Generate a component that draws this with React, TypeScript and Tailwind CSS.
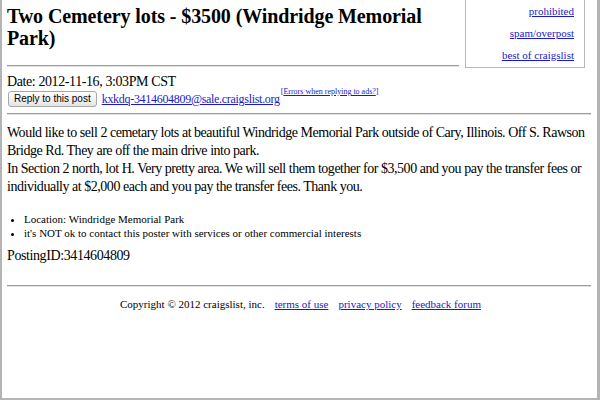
import React from "react";

const Hr = ({ className = "" }: { className?: string }) => (
  <div className={"border-t border-t-[#9c9c9c] border-b border-b-[#e2e2e2] " + className} />
);

export default function App() {
  return (
    <div
      className="w-[600px] h-[400px] bg-white border-l-2 border-r-[3px] border-b-2 border-[#b4b4b4] text-black overflow-hidden"
      style={{ fontFamily: '"Liberation Serif", "Times New Roman", serif' }}
    >
      <div className="pl-[5px] pr-[3px]">
        <div className="flex">
          <div className="flex-1 pr-[6px]">
            <h2 className="text-[20px] leading-[22px] font-bold pt-[5px] tracking-[-0.1px]">
              Two Cemetery lots - $3500 (Windridge Memorial Park)
            </h2>
            <Hr className="mt-[16px]" />
          </div>
          <div className="w-[120px] h-[68px] border border-t-0 border-[#b8b8b8] flex flex-col items-end pr-[10px] pt-[4px] gap-[7px] text-[11px] leading-[15px] mr-[9px]">
            <a className="text-[#1a1acc] underline">prohibited</a>
            <a className="text-[#1a1acc] underline">spam/overpost</a>
            <a className="text-[#1a1acc] underline">best of craigslist</a>
          </div>
        </div>
        <div className="text-[14px] leading-[16px] mt-[6px] tracking-[-0.4px]">Date: 2012-11-16, 3:03PM CST</div>
        <div className="flex items-center mt-[1px] pl-[1px]">
          <button
            className="h-[16px] px-[5px] leading-[14px] rounded-[3px] border border-[#a8a8a8] bg-gradient-to-b from-white to-[#e4e4e4]"
            style={{ fontFamily: '"Liberation Sans", Arial, sans-serif', fontSize: "10px" }}
          >
            Reply to this post
          </button>
          <a className="ml-[5px] text-[12px] leading-[16px] text-[#1a1acc] underline tracking-[-0.3px]">
            kxkdq-3414604809@sale.craigslist.org
          </a>
          <sup className="text-[8px] leading-[8px] text-[#1a1acc] self-start mt-[1px] ml-[1px]">
            [<span className="underline">Errors when replying to ads?</span>]
          </sup>
        </div>
        <Hr className="mt-[6px] mr-[3px]" />
        <div className="text-[14px] leading-[18px] mt-[9px] tracking-[-0.47px]">
          Would like to sell 2 cemetary lots at beautiful Windridge Memorial Park outside of Cary, Illinois. Off S. Rawson
          Bridge Rd. They are off the main drive into park.
          <br />
          In Section 2 north, lot H. Very pretty area. We will sell them together for $3,500 and you pay the transfer fees or
          individually at $2,000 each and you pay the transfer fees. Thank you.
        </div>
        <ul className="mt-[16px] text-[11px] leading-[14px] list-disc pl-[17px]">
          <li>Location: Windridge Memorial Park</li>
          <li>it's NOT ok to contact this poster with services or other commercial interests</li>
        </ul>
        <div className="text-[14px] leading-[16px] mt-[8px] tracking-[-0.4px]">PostingID:3414604809</div>
        <Hr className="mt-[21px] mr-[3px]" />
        <div className="flex justify-center gap-[10px] text-[11px] leading-[14px] mt-[10px]">
          <span>Copyright © 2012 craigslist, inc.</span>
          <a className="text-[#1a1acc] underline">terms of use</a>
          <a className="text-[#1a1acc] underline">privacy policy</a>
          <a className="text-[#1a1acc] underline">feedback forum</a>
        </div>
      </div>
    </div>
  );
}
